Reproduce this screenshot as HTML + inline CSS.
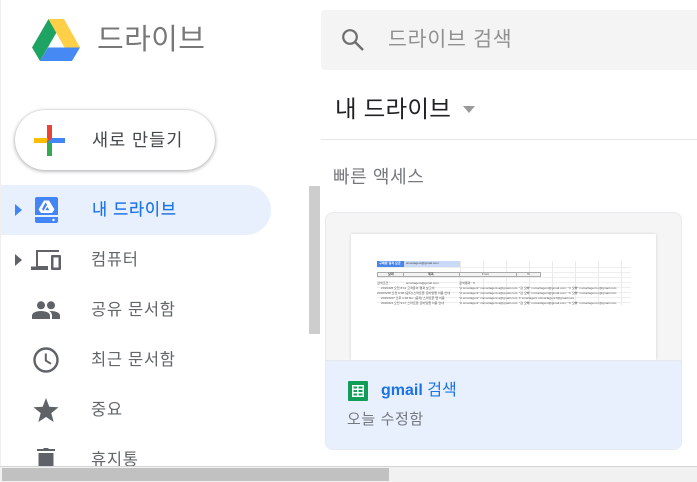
<!DOCTYPE html>
<html lang="ko"><head><meta charset="utf-8"><style>
html,body{margin:0;padding:0;background:#fff}
body{width:697px;height:482px;overflow:hidden;position:relative;font-family:"Liberation Sans","Noto Sans CJK KR",sans-serif}
.a{position:absolute;white-space:nowrap}
.nav{font-size:16.5px;color:#62666a;left:91px;line-height:20px;letter-spacing:.7px}
svg{position:absolute;overflow:visible}
.t{position:absolute;white-space:nowrap;font-size:3.1px;line-height:5px;color:#555}
</style></head><body>
<div class="a" style="left:0;top:0;width:1px;height:466px;background:#efefef"></div>

<svg style="left:32px;top:19px" width="48" height="42" viewBox="0 0 48 42">
<path d="M16.5 0 0 28.5 8 42 24.5 13.5z" fill="#1da462"/>
<path d="M16.5 0H32L48 28.5H32.5z" fill="#ffcf48"/>
<path d="M8 42 16 28.5H48L40 42z" fill="#4688f4"/>
</svg>
<div class="a" style="left:97px;top:21px;font-size:29px;line-height:38px;color:#787878;letter-spacing:.4px">드라이브</div>

<div class="a" style="left:321px;top:10px;width:376px;height:60px;background:#f4f4f4;border-radius:4px 0 0 4px"></div>
<svg style="left:339px;top:26px" width="26" height="26" viewBox="0 0 26 26"><circle cx="11" cy="11" r="6.800" fill="none" stroke="#6e6e6e" stroke-width="2.200"/><path d="M16 16 24 24" stroke="#6e6e6e" stroke-width="2.400"/></svg>
<div class="a" style="left:388px;top:26px;font-size:20.500px;line-height:28px;color:#909090;letter-spacing:.8px">드라이브 검색</div>

<div class="a" style="left:335px;top:93px;font-size:23.500px;line-height:32px;color:#202124;letter-spacing:.25px">내 드라이브</div>
<div class="a" style="left:463px;top:106px;width:0;height:0;border-left:6.500px solid transparent;border-right:6.500px solid transparent;border-top:7px solid #9a9a9a"></div>
<div class="a" style="left:321px;top:139px;width:376px;height:1px;background:#e6e6e6"></div>
<div class="a" style="left:333px;top:165px;font-size:18px;line-height:24px;color:#75787c;letter-spacing:.6px">빠른 액세스</div>

<div class="a" style="left:15px;top:110px;width:200px;height:60px;border-radius:30px;background:#fff;box-shadow:0 1px 3px 1px rgba(60,64,67,.3),0 0 1px rgba(60,64,67,.25)"></div>
<svg style="left:34px;top:125px" width="31" height="31" viewBox="0 0 31 31">
<rect x="13" y="0" width="5" height="15.500" fill="#ea4335"/>
<rect x="0" y="13" width="13.500" height="5" fill="#fbbc04"/>
<rect x="13" y="15.500" width="5" height="15.500" fill="#34a853"/>
<path d="M13.500 18 18 13H31V18z" fill="#4285f4"/>
</svg>
<div class="a" style="left:92px;top:128px;font-size:17.500px;line-height:24px;color:#44474b;letter-spacing:1px">새로 만들기</div>

<div class="a" style="left:1px;top:185px;width:270px;height:50px;background:#e8f0fe;border-radius:0 25px 25px 0"></div>
<div class="a" style="left:15px;top:204px;width:0;height:0;border-top:6px solid transparent;border-bottom:6px solid transparent;border-left:7px solid #4285f4"></div>
<svg style="left:35px;top:197px" width="23" height="26" viewBox="0 0 23 26">
<path d="M2 0H21a2 2 0 0 1 2 2V18H0V2A2 2 0 0 1 2 0zM0 20H23V24a2 2 0 0 1-2 2H2a2 2 0 0 1-2-2z" fill="#4285f4"/>
<path d="M9 3.500h5l5.500 9-2.500 3.500H6L3.500 12.500z" fill="#fff"/>
<path d="M10.500 5.500 7 12 8.300 14 12.200 7.800zM12.300 10 14.500 13.300H10.300z" fill="#4285f4"/>
<circle cx="18.500" cy="23" r="1.200" fill="#fff"/>
</svg>
<div class="a nav" style="top:200px;left:92px;color:#1a73e8;-webkit-text-stroke:.2px #1a73e8">내 드라이브</div>

<div class="a" style="left:15px;top:254px;width:0;height:0;border-top:6px solid transparent;border-bottom:6px solid transparent;border-left:7px solid #5f6368"></div>
<svg style="left:31px;top:250px" width="30" height="20" viewBox="0 0 30 20" fill="#5f6368">
<path d="M5 0H28V2H7V16H17V20H0V16.500H5z"/>
<path d="M21 5H29a1 1 0 0 1 1 1V19a1 1 0 0 1-1 1H21a1 1 0 0 1-1-1V6a1 1 0 0 1 1-1zM22.500 7.500V17.500H27.500V7.500z" fill-rule="evenodd"/>
</svg>
<div class="a nav" style="top:250px">컴퓨터</div>

<svg style="left:32px;top:301px" width="28" height="18" viewBox="0 0 28 18" fill="#5f6368">
<circle cx="9" cy="4.300" r="4"/><circle cx="19" cy="4.300" r="4"/>
<path d="M0 18V14.500C0 11.500 5 10 9 10s9 1.500 9 4.500V18z"/><path d="M20 18V14.500c0-1.800-1-3.300-2.500-4.400.7-.1 1-.1 1.500-.1 4 0 9 1.500 9 4.500V18z"/>
</svg>
<div class="a nav" style="top:300px">공유 문서함</div>

<svg style="left:33px;top:347px" width="26" height="26" viewBox="0 0 26 26"><circle cx="13" cy="13" r="11.500" fill="none" stroke="#5f6368" stroke-width="2.400"/><path d="M12.800 6.500V13.600L18 16.800" fill="none" stroke="#5f6368" stroke-width="2"/></svg>
<div class="a nav" style="top:350px">최근 문서함</div>

<svg style="left:33px;top:398px" width="26" height="24" viewBox="0 0 26 24"><path d="M13 0 16.300 8.700 25.500 9.300 18.300 15.100 20.700 24 13 19 5.300 24 7.700 15.100 .5 9.300 9.700 8.700z" fill="#5f6368"/></svg>
<div class="a nav" style="top:400px">중요</div>

<svg style="left:37px;top:448px" width="18" height="18" viewBox="0 0 18 18" fill="#5f6368"><path d="M6 1 7 0H11L12 1H18V3H0V1zM1.500 5H16.500V18H1.500z"/></svg>
<div class="a nav" style="top:450px">휴지통</div>

<div class="a" style="left:309px;top:186px;width:11px;height:148px;background:#cdcdcd"></div>

<div class="a" style="left:325px;top:212px;width:355px;height:236px;border:1px solid #e8eaed;border-radius:8px;background:#f5f5f6;overflow:hidden">
 <div class="a" style="left:25px;top:21px;width:305px;height:126px;background:#fff;box-shadow:0 0 3px rgba(0,0,0,.15);overflow:hidden">
  <div style="position:absolute;left:0;top:0;width:305px;height:126px;filter:blur(.3px)">
  <div class="a" style="left:26px;top:27px;width:83px;height:6px;background:#c9daf8"></div>
  <div class="a" style="left:26px;top:27px;width:27px;height:6px;background:#4a86e8"></div>
  <div class="t" style="left:28px;top:27px;color:#fff;font-weight:700">구매량 결과 요금</div>
  <div class="t" style="left:55px;top:27px;color:#444">smartagent@gmail.com</div>
  <div class="a" style="left:109px;top:27px;width:171px;height:44px;background:repeating-linear-gradient(to right,#e9e9e9 0,#e9e9e9 1px,transparent 1px,transparent 23px)"></div>
  <div class="a" style="left:26px;top:33px;width:254px;height:38px;background:repeating-linear-gradient(to bottom,#eee 0,#eee 1px,transparent 1px,transparent 5px)"></div>
  <div class="a" style="left:26px;top:38px;width:164px;height:5px;background:#f3f3f3;border:1px solid #aaa;box-sizing:border-box"></div>
  <div class="a" style="left:52px;top:38px;width:1px;height:5px;background:#aaa"></div>
  <div class="a" style="left:108px;top:38px;width:1px;height:5px;background:#aaa"></div>
  <div class="a" style="left:165px;top:38px;width:1px;height:5px;background:#aaa"></div>
  <div class="t" style="left:37px;top:38px;font-weight:700">날짜</div>
  <div class="t" style="left:77px;top:38px;font-weight:700">제목</div>
  <div class="t" style="left:131px;top:38px">From</div>
  <div class="t" style="left:176px;top:38px">To</div>
  <div class="t" style="left:26px;top:47px">검색조건 :</div>
  <div class="t" style="left:55px;top:47px">smartagent@gmail.com</div>
  <div class="t" style="left:108px;top:47px">검색결과 : 5</div>
  <div class="t" style="left:30px;top:52px">2019/4/8 오전 8:11 고객문의 결과 보고서</div>
  <div class="t" style="left:108px;top:52px">"A smartagent" nsmartagent.a@gmail.com; "김 오빠" nsmartagent@gmail.com; "C 오빠" nsmartagent.c@gmail.com</div>
  <div class="t" style="left:26px;top:57px">2019/3/28 오전 9:00 [공지] 스마트폰 모바일앱 이용 안내</div>
  <div class="t" style="left:108px;top:57px">"A smartagent" nsmartagent.a@gmail.com; "김 오빠" nsmartagent@gmail.com; "C 오빠" nsmartagent.c@gmail.com</div>
  <div class="t" style="left:30px;top:62px">2019/3/27 오후 1:46 Re: [공지] 스마트폰 앱 이용</div>
  <div class="t" style="left:108px;top:62px">"A smartagent" nsmartagent.a@gmail.com; F smartagent nsmartagent.f@gmail.com</div>
  <div class="t" style="left:30px;top:67px">2019/4/4 오전 9:17 스마트폰 모바일앱 이용 안내</div>
  <div class="t" style="left:108px;top:67px">"A smartagent" nsmartagent.a@gmail.com; "김 오빠" nsmartagent@gmail.com; "C 오빠" nsmartagent.c@gmail.com</div>
  </div>
 </div>
 <div class="a" style="left:0;top:147px;width:355px;height:89px;background:#e8f0fe;border-top:1px solid #e3e6ea;box-sizing:border-box"></div>
 <svg style="left:22px;top:168px" width="20" height="20" viewBox="0 0 20 20"><rect width="20" height="20" rx="1" fill="#0f9d58"/><path d="M4 4H16V16H4zM5.500 5.500V7.500H9V5.500zM10.500 5.500V7.500H14.500V5.500zM5.500 9V11H9V9zM10.500 9V11H14.500V9zM5.500 12.500V14.500H9V12.500zM10.500 12.500V14.500H14.500V12.500z" fill="#fff" fill-rule="evenodd"/></svg>
 <div class="a" style="left:55px;top:167px;font-size:16px;line-height:22px;color:#1a73e8"><b>gmail</b> 검색</div>
 <div class="a" style="left:21px;top:197px;font-size:15px;line-height:20px;color:#75787c;letter-spacing:.6px">오늘 수정함</div>
</div>

<div class="a" style="left:0;top:466px;width:697px;height:16px;background:#f1f1f1;border-top:1px solid #d4d4d4;box-sizing:border-box"></div>
<div class="a" style="left:2px;top:468px;width:387px;height:13px;background:#c1c1c1"></div>
</body></html>
